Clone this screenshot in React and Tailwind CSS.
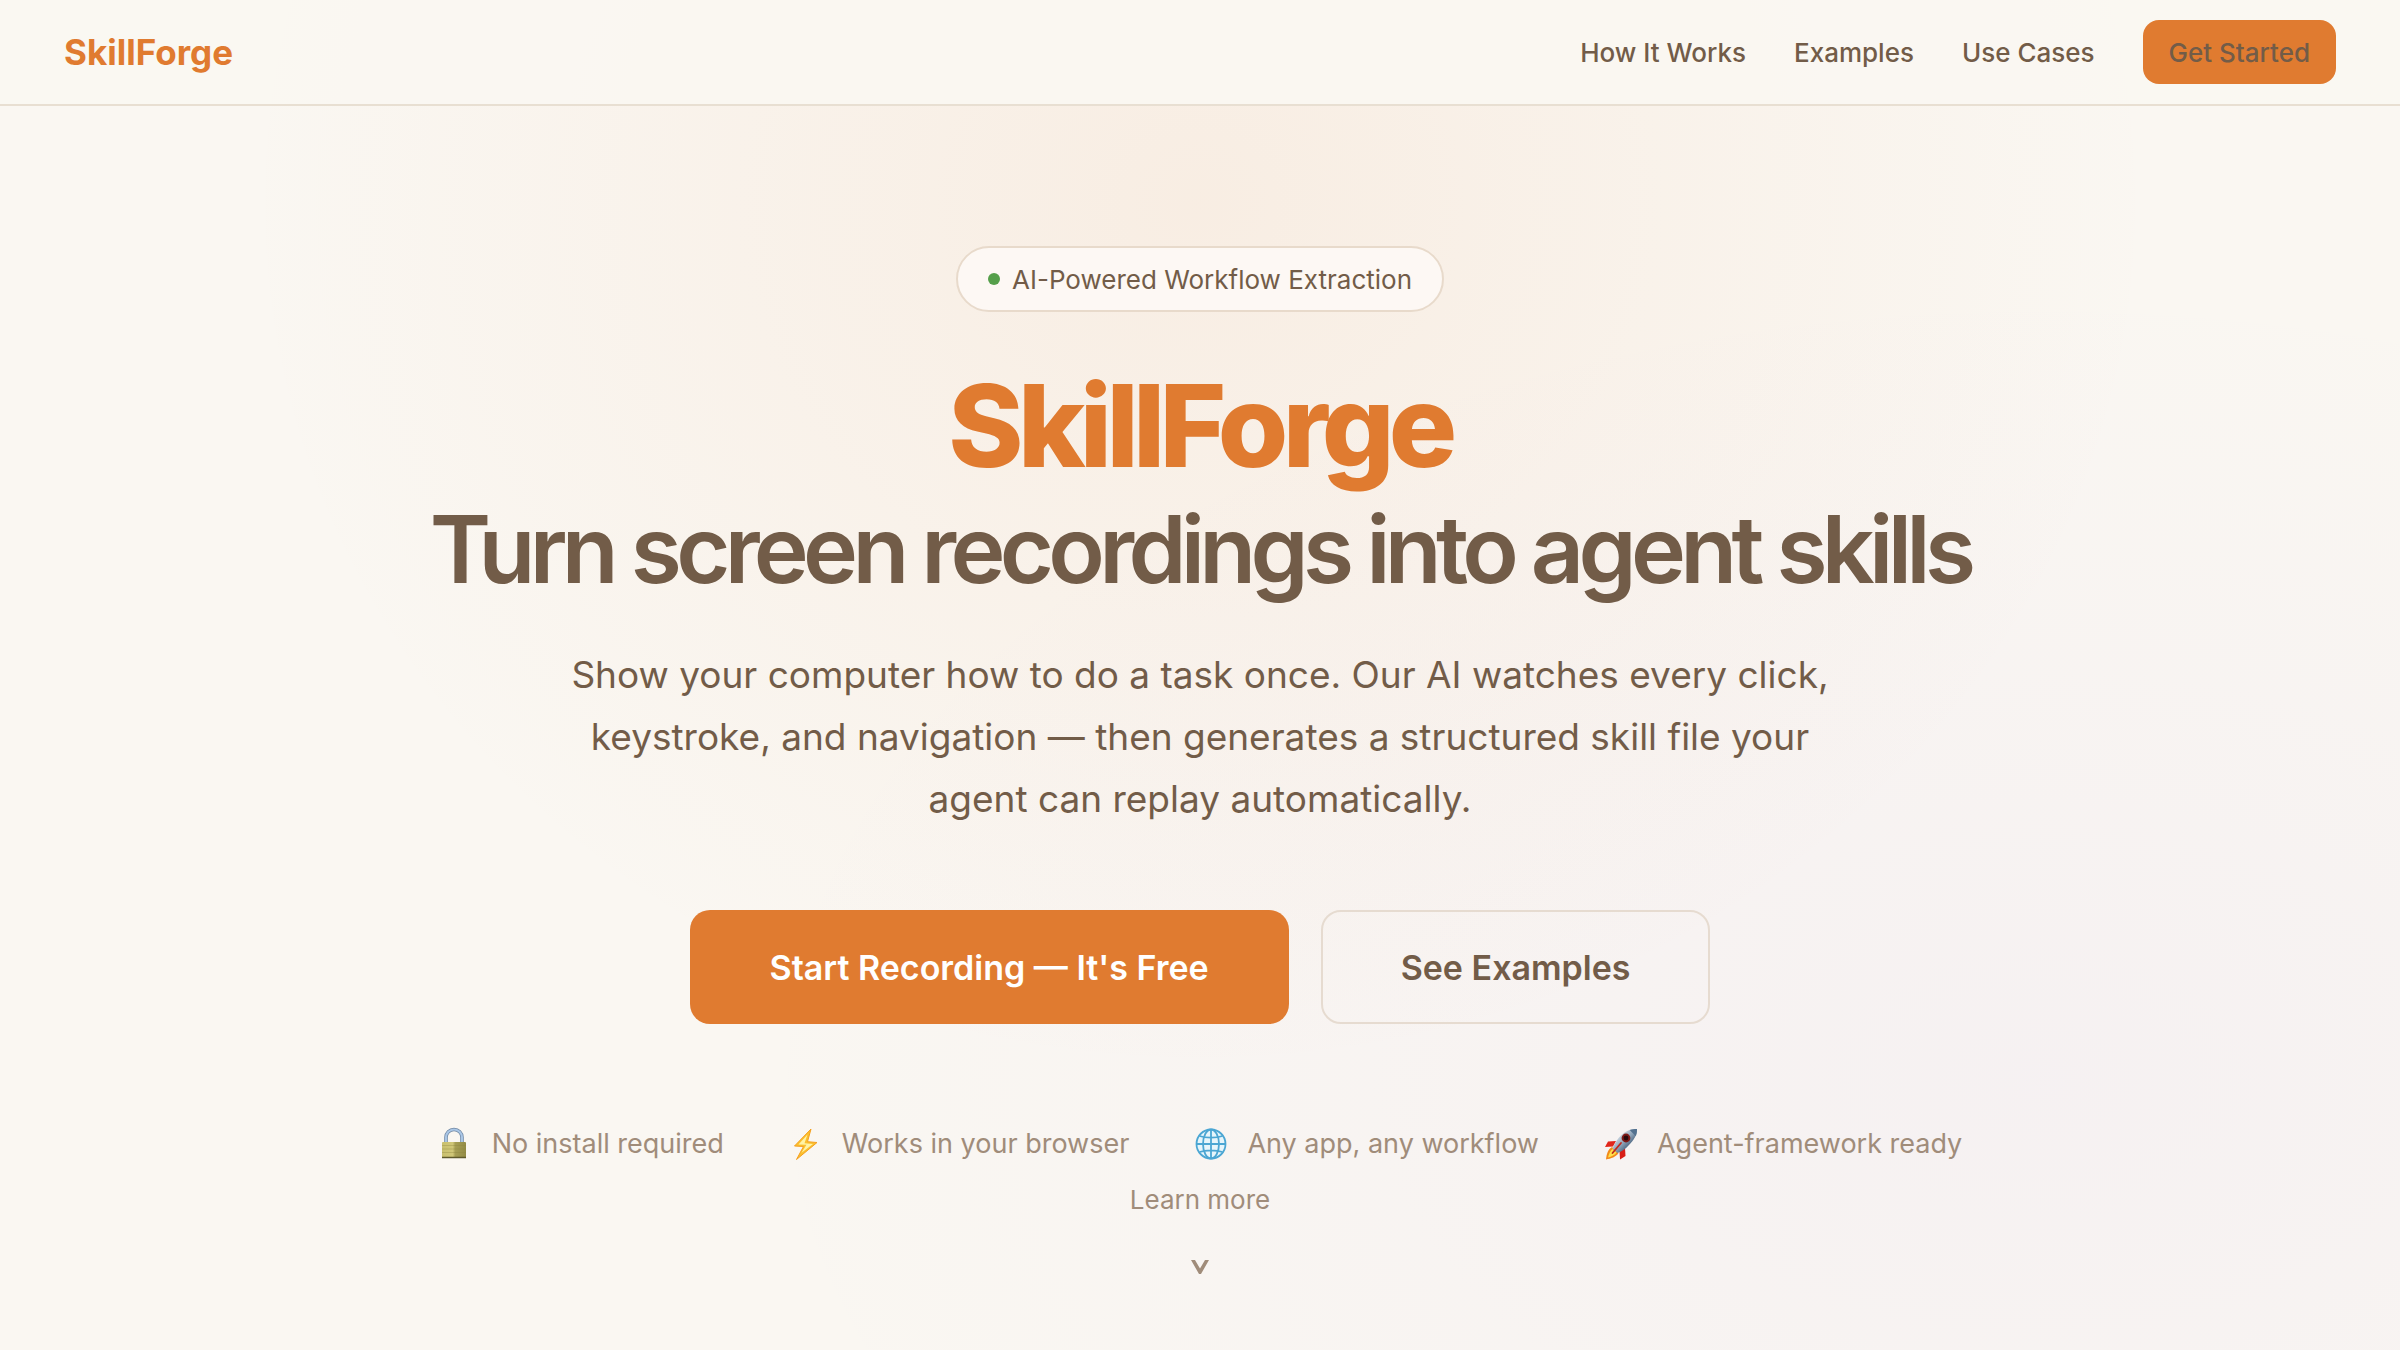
const navLinks = ['How It Works', 'Examples', 'Use Cases'];

function LockIcon() {
  return (
    <svg viewBox="0 0 36 36" className="size-9" aria-hidden="true">
      <defs>
        <linearGradient id="lock-body" x1="0" x2="1" y1="0" y2="0">
          <stop offset="0" stopColor="#c9c06e" />
          <stop offset="0.45" stopColor="#d0c778" />
          <stop offset="0.55" stopColor="#a79f55" />
          <stop offset="1" stopColor="#928b45" />
        </linearGradient>
      </defs>
      <path d="M8 18V11.500a8 8 0 0 1 16 0V18" fill="none" stroke="#6f87a3" strokeWidth="3.600" />
      <path d="M8 18V11.500a8 8 0 0 1 16 0V18" fill="none" stroke="#a9c6e6" strokeWidth="2.200" />
      <rect x="4" y="16" width="24" height="16" rx="1" fill="url(#lock-body)" />
      <path d="M4 19.500h24M4 23h24M4 26.500h24" stroke="#8b8440" strokeOpacity="0.350" />
      <path d="M4 31.500h24" stroke="#5f5a2c" strokeWidth="1.500" />
    </svg>
  );
}

function BoltIcon() {
  return (
    <svg viewBox="0 0 36 36" className="size-9" aria-hidden="true">
      <path d="M23 3 6.500 20l9 .5L8.500 33.500 29 16.500l-9.500-.8z" fill="#fbc02d" stroke="#f5a01f" strokeWidth="1" strokeLinejoin="round" />
      <path d="M19.500 8.500 10.500 18.500l8 .3-5 8L25 18l-8.500-.8z" fill="#fff3a6" />
    </svg>
  );
}

function GlobeIcon() {
  return (
    <svg viewBox="0 0 36 36" className="size-9" fill="none" stroke="#4ba6d3" strokeWidth="1.800" aria-hidden="true">
      <circle cx="18" cy="18" r="14.500" fill="#e6f5fb" />
      <ellipse cx="18" cy="18" rx="8" ry="14.500" />
      <path d="M18 3.500v29M3.500 18h29M6.500 10c6 2.200 17 2.200 23 0M6.500 26c6-2.200 17-2.200 23 0" />
    </svg>
  );
}

function RocketIcon() {
  return (
    <svg viewBox="0 0 36 36" className="size-9" aria-hidden="true">
      <defs>
        <linearGradient id="rocket-body" x1="0.200" x2="0.800" y1="0.200" y2="0.800">
          <stop offset="0" stopColor="#dfe7ee" />
          <stop offset="0.500" stopColor="#8ea3b8" />
          <stop offset="1" stopColor="#2c4766" />
        </linearGradient>
      </defs>
      <path d="M13 15 5 15.500 2 21l8-.5z" fill="#e0261b" />
      <path d="M22 22l.5 8-5.500 3.500-.5-8z" fill="#d81e16" />
      <path d="M9 21c-4 2-5.500 7-6 12.500C8 32.500 13 31 15.500 27z" fill="#f28a1a" />
      <path d="M9.500 23c-2.500 2-3.500 5-4.500 8.500C8.500 30.500 12 29 13.500 26.500z" fill="#ffe14a" />
      <path d="M34 3c-7 0-13 2.500-18 8.500-3 3.500-5 7.500-6.500 11l5 4.500c4-1.500 8-4 11-7.500C31 14 34 9 34 3z" fill="url(#rocket-body)" />
      <path d="M34 3c-2.500 0-5 .3-7.300 1.100l6.100 6.200C33.700 8 34 5.500 34 3z" fill="#53718f" />
      <circle cx="23" cy="12" r="4.400" fill="#7d1714" />
      <circle cx="23" cy="12" r="2.400" fill="#26080c" />
      <path d="M18 17 9.500 27" stroke="#c2281c" strokeWidth="1.800" strokeLinecap="round" />
    </svg>
  );
}

const features = [
  { label: 'No install required', Icon: LockIcon },
  { label: 'Works in your browser', Icon: BoltIcon },
  { label: 'Any app, any workflow', Icon: GlobeIcon },
  { label: 'Agent-framework ready', Icon: RocketIcon },
];

export default function App() {
  return (
    <div className="flex min-h-screen flex-col bg-[#faf7f2] bg-[radial-gradient(ellipse_40%_65%_at_50%_15%,rgba(224,123,48,0.08),transparent),radial-gradient(ellipse_55%_60%_at_85%_80%,rgba(139,92,246,0.04),transparent)] font-[Inter,sans-serif] text-[#725c48]">
      <header className="flex items-center justify-between border-b-2 border-[#e8dfd2] bg-[#faf7f2]/90 px-16 py-5">
        <a href="#top" className="text-[35px] leading-10 font-bold text-[#e07b30]">SkillForge</a>
        <nav className="flex items-center gap-12 text-[26px] font-medium">
          {navLinks.map((label) => (
            <a key={label} href="#more">{label}</a>
          ))}
          <a href="#start" className="flex h-16 items-center rounded-2xl bg-[#e07b30] px-[26px]">Get Started</a>
        </nav>
      </header>

      <main id="top" className="flex flex-1 flex-col items-center pt-35 text-center">
        <div className="flex h-[66px] items-center gap-3 rounded-full border-2 border-[#e8dacb] bg-[#fdf8f4] px-[30px] text-[26px]">
          <span className="size-3 rounded-full bg-[#559f4a]" />
          AI-Powered Workflow Extraction
        </div>

        <h1 className="mt-14 text-[114px] leading-[116px] font-extrabold tracking-tighter">
          <span className="block text-[#e07b30]">SkillForge</span>
          <span className="block text-[93px] leading-[130px] font-semibold">Turn screen recordings into agent skills</span>
        </h1>

        <p className="mt-[30px] max-w-[1280px] text-[37px] leading-[62px]">
          Show your computer how to do a task once. Our AI watches every click, keystroke, and navigation — then generates a structured skill file your agent can replay automatically.
        </p>

        <div className="mt-20 flex gap-8 text-[34px] font-semibold">
          <button type="button" className="h-[114px] rounded-[20px] bg-[#e07b30] px-20 text-white">Start Recording — It's Free</button>
          <button type="button" className="h-[114px] rounded-[20px] border-2 border-[#e6dbd0] px-[78px]">See Examples</button>
        </div>

        <ul className="mt-25 flex gap-16 text-[27px] leading-10 text-[#a08c7a]">
          {features.map(({ label, Icon }) => (
            <li key={label} className="flex items-center gap-[18px]">
              <Icon />
              {label}
            </li>
          ))}
        </ul>

        <a id="more" href="#top" className="mt-4 flex flex-col items-center text-[26px] leading-10 text-[#a08c7a]">
          Learn more
          <svg viewBox="0 0 18 14" className="mt-10 h-3.5 w-[18px]" fill="currentColor" aria-hidden="true">
            <path d="M0 0h4l5 8.500L14 0h4L10 14H8z" />
          </svg>
        </a>
      </main>
    </div>
  );
}
